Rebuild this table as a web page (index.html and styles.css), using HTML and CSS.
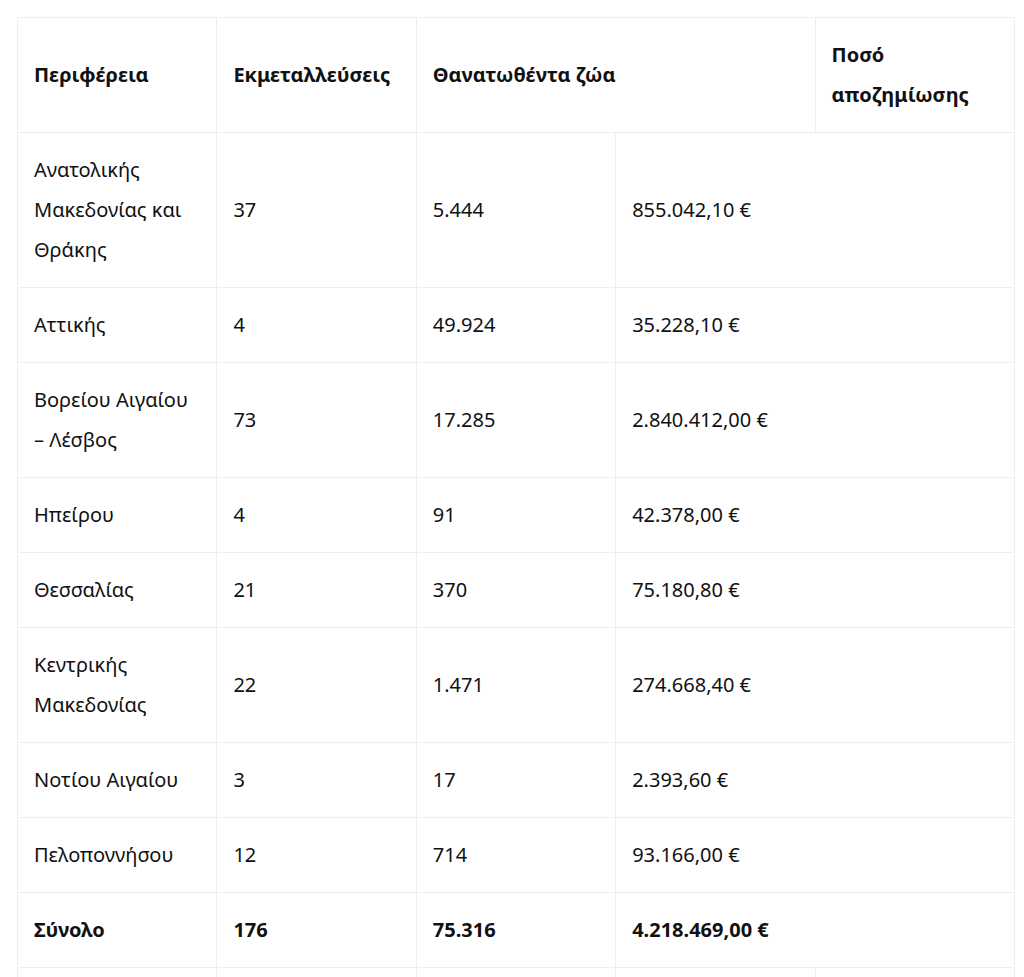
FILE: index.html
```html
<!DOCTYPE html>
<html lang="el">
<head>
<meta charset="utf-8">
<title>Αποζημιώσεις</title>
<link rel="stylesheet" href="styles.css">
</head>
<body>
<div class="wrap">
<table class="data">
<colgroup><col><col><col><col><col></colgroup>
<thead>
<tr>
<th>Περιφέρεια</th>
<th>Εκμεταλλεύσεις</th>
<th colspan="2">Θανατωθέντα ζώα</th>
<th>Ποσό αποζημίωσης</th>
</tr>
</thead>
<tbody>
<tr><td>Ανατολικής Μακεδονίας και Θράκης</td><td>37</td><td>5.444</td><td colspan="2">855.042,10 €</td></tr>
<tr><td>Αττικής</td><td>4</td><td>49.924</td><td colspan="2">35.228,10 €</td></tr>
<tr><td>Βορείου Αιγαίου – Λέσβος</td><td>73</td><td>17.285</td><td colspan="2">2.840.412,00 €</td></tr>
<tr><td>Ηπείρου</td><td>4</td><td>91</td><td colspan="2">42.378,00 €</td></tr>
<tr><td>Θεσσαλίας</td><td>21</td><td>370</td><td colspan="2">75.180,80 €</td></tr>
<tr><td>Κεντρικής Μακεδονίας</td><td>22</td><td>1.471</td><td colspan="2">274.668,40 €</td></tr>
<tr><td>Νοτίου Αιγαίου</td><td>3</td><td>17</td><td colspan="2">2.393,60 €</td></tr>
<tr><td>Πελοποννήσου</td><td>12</td><td>714</td><td colspan="2">93.166,00 €</td></tr>
<tr class="total"><td>Σύνολο</td><td>176</td><td>75.316</td><td colspan="2">4.218.469,00 €</td></tr>
<tr class="empty"><td></td><td></td><td></td><td></td><td></td></tr>
</tbody>
</table>
</div>
</body>
</html>
```
FILE: styles.css
```css
html, body {
  margin: 0;
  padding: 0;
  background: #ffffff;
}
body {
  font-family: "Noto Sans", "Open Sans", sans-serif;
  font-size: 20px;
  line-height: 40px;
  color: #111111;
}
.wrap {
  padding: 17px 0 0 17px;
}
.data {
  width: 998px;
  table-layout: fixed;
  border-collapse: collapse;
  border-spacing: 0;
}
.data col {
  width: 20%;
}
.data th,
.data td {
  border: 1px solid #eeeeee;
  padding: 17px 16px;
  text-align: left;
  vertical-align: middle;
}
.data th {
  font-weight: 700;
}
.total td {
  font-weight: 700;
}
.empty td {
  height: 40px;
}
```
